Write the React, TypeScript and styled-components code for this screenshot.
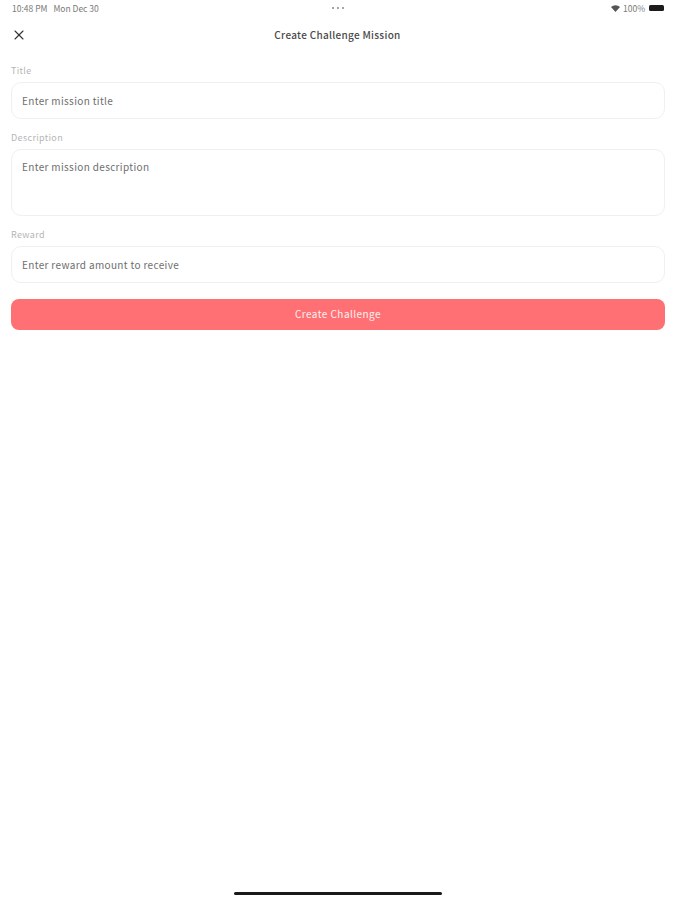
import React from "react";
import styled, { createGlobalStyle } from "styled-components";
import { X } from "lucide-react";

const GlobalStyle = createGlobalStyle`
  html, body {
    margin: 0;
    padding: 0;
    background: #fff;
  }
  * {
    box-sizing: border-box;
  }
`;

const Page = styled.div`
  width: 675px;
  height: 900px;
  display: flex;
  flex-direction: column;
  background: #fff;
  font-family: "Noto Sans CJK KR", "Noto Sans", sans-serif;
`;

const StatusBar = styled.div`
  height: 16px;
  padding: 0 11px 0 12px;
  display: grid;
  grid-template-columns: 1fr auto 1fr;
  align-items: center;
  font-size: 8.5px;
  color: #7a7a7a;
`;

const StatusLeft = styled.div`
  display: flex;
  gap: 6px;
`;

const Dots = styled.div`
  display: flex;
  gap: 3px;
`;

const Dot = styled.span`
  width: 2px;
  height: 2px;
  border-radius: 50%;
  background: #888;
`;

const StatusRight = styled.div`
  display: flex;
  justify-content: flex-end;
  align-items: center;
  gap: 3px;
`;

const Battery = styled.span`
  width: 15px;
  height: 6px;
  margin-left: 1px;
  border-radius: 1.5px;
  background: #1c1c1c;
`;

const Header = styled.header`
  height: 38px;
  padding: 0 11px;
  display: grid;
  grid-template-columns: 1fr auto 1fr;
  align-items: center;
`;

const CloseButton = styled.button`
  width: 16px;
  height: 16px;
  padding: 0;
  border: 0;
  background: none;
  color: #333;
  display: flex;
`;

const HeaderTitle = styled.h1`
  margin: 0;
  font-size: 10px;
  line-height: 14px;
  font-weight: 500;
  color: #4a4a4a;
  letter-spacing: 0.3px;
`;

const Form = styled.form`
  padding: 10px 10px 0 11px;
  display: flex;
  flex-direction: column;
`;

const Label = styled.label`
  height: 13px;
  font-size: 9px;
  line-height: 13px;
  color: #b5b5b5;
  letter-spacing: 0.35px;
  margin-bottom: 5px;
`;

const Field = styled.div<{ $height: number; $top?: boolean }>`
  height: ${(p) => p.$height}px;
  padding: ${(p) => (p.$top ? "10px" : "0")} 10px 0;
  margin-bottom: 12px;
  display: flex;
  align-items: ${(p) => (p.$top ? "flex-start" : "center")};
  border: 1px solid #f0f0f0;
  border-radius: 10px;
  font-size: 10px;
  line-height: 14px;
  color: #6e6e6e;
  letter-spacing: 0.35px;
`;

const Submit = styled.button`
  height: 31px;
  margin-top: 4px;
  padding: 0 0 3px;
  border: 0;
  border-radius: 8px;
  background: #ff7075;
  color: #fff0f0;
  font-family: inherit;
  font-size: 10px;
  letter-spacing: 0.45px;
`;

const HomeBar = styled.div`
  width: 208px;
  height: 3px;
  margin: auto auto 5px;
  border-radius: 2px;
  background: #1a1a1a;
`;

export default function App() {
  return (
    <Page>
      <GlobalStyle />
      <StatusBar>
        <StatusLeft>
          <span>10:48 PM</span>
          <span>Mon Dec 30</span>
        </StatusLeft>
        <Dots>
          <Dot />
          <Dot />
          <Dot />
        </Dots>
        <StatusRight>
          <svg width="9" height="7" viewBox="0 0 9 7">
            <path d="M0 2 A6.5 6.5 0 0 1 9 2 L4.5 7 Z" fill="#555" />
          </svg>
          <span>100%</span>
          <Battery />
        </StatusRight>
      </StatusBar>
      <Header>
        <CloseButton aria-label="Close">
          <X size={16} strokeWidth={1.6} />
        </CloseButton>
        <HeaderTitle>Create Challenge Mission</HeaderTitle>
      </Header>
      <Form>
        <Label>Title</Label>
        <Field $height={37}>Enter mission title</Field>
        <Label>Description</Label>
        <Field $height={67} $top>
          Enter mission description
        </Field>
        <Label>Reward</Label>
        <Field $height={37}>Enter reward amount to receive</Field>
        <Submit type="button">Create Challenge</Submit>
      </Form>
      <HomeBar />
    </Page>
  );
}
